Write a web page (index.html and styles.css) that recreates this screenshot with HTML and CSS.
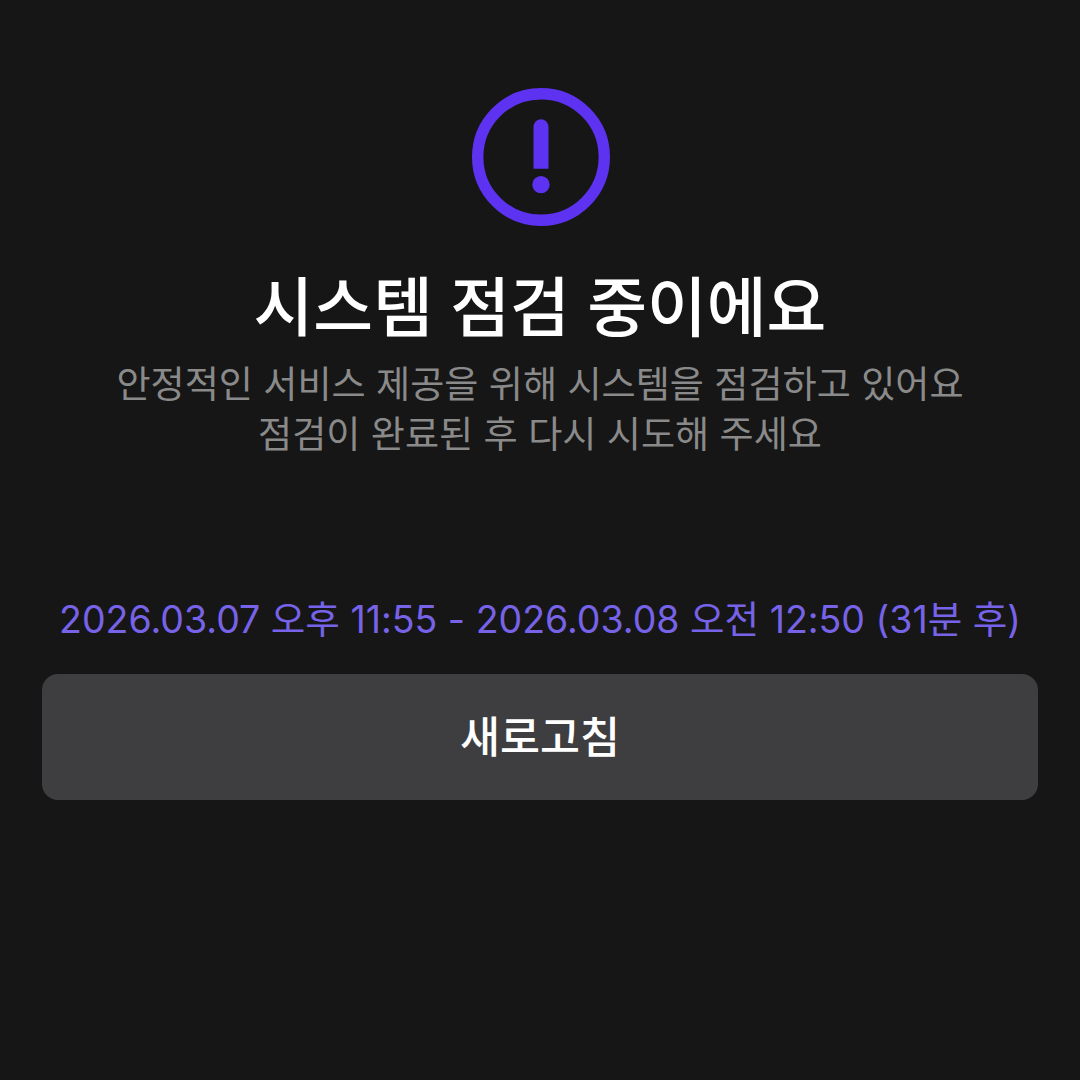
FILE: index.html
```html
<!DOCTYPE html>
<html lang="ko">
<head>
    <meta charset="UTF-8">
    <meta name="viewport" content="width=device-width, initial-scale=1.0">
    <title>시스템 점검</title>
    <link rel="stylesheet" href="styles.css">
</head>
<body>

<div class="page">
    <svg class="alert-icon" width="140" height="140" viewBox="0 0 140 140" fill="none">
        <circle cx="71" cy="70" r="63.3" stroke="#5d32f0" stroke-width="11.4"/>
        <path d="M63.5 39.8a7.5 7.5 0 0 1 15 0V81.7H63.5Z" fill="#5d32f0"/>
        <circle cx="71" cy="97.6" r="8.7" fill="#5d32f0"/>
    </svg>
    <h1 class="title">시스템 점검 중이에요</h1>
    <p class="desc">안정적인 서비스 제공을 위해 시스템을 점검하고 있어요<br>점검이 완료된 후 다시 시도해 주세요</p>
    <p class="schedule">2026.03.07 오후 11:55 - 2026.03.08 오전 12:50 (31분 후)</p>
    <button class="refresh-button">새로고침</button>
</div>

</body>
</html>
```

FILE: styles.css
```css
body {
    margin: 0;
    background-color: #161616;
    font-family: 'Inter', 'Noto Sans CJK KR', sans-serif;
}
.page {
    display: flex;
    flex-direction: column;
    align-items: center;
    height: 1080px;
    padding: 87px 42px 0;
    box-sizing: border-box;
}
.alert-icon {
    display: block;
}
.title {
    margin: 39px 0 0;
    font-size: 65px;
    line-height: 84px;
    font-weight: 500;
    color: #ffffff;
    white-space: nowrap;
}
.desc {
    margin: 10px 0 0;
    font-size: 37.1px;
    line-height: 49.5px;
    color: #8a8a8a;
    text-align: center;
    white-space: nowrap;
}
.schedule {
    margin: 136px 0 0;
    font-size: 37.5px;
    line-height: 50px;
    color: #7763e8;
    white-space: nowrap;
}
.refresh-button {
    width: 100%;
    height: 126px;
    margin-top: 29px;
    padding: 0 0 5px;
    background-color: #3e3e40;
    color: #ffffff;
    font-family: inherit;
    font-size: 43.5px;
    font-weight: 500;
    border: none;
    border-radius: 16px;
}
```
